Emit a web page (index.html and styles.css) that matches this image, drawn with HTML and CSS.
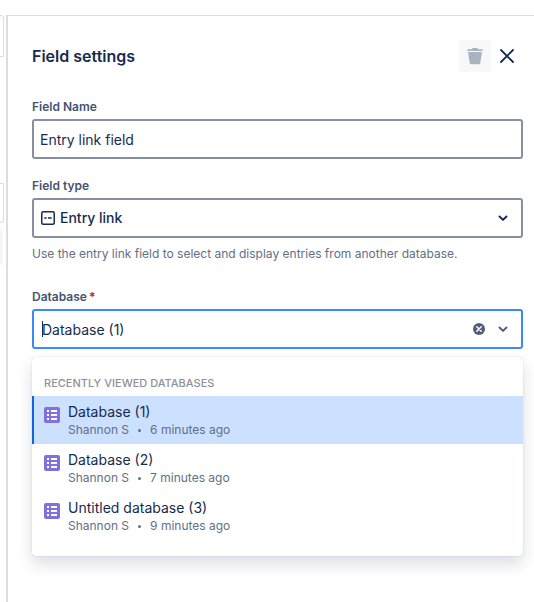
FILE: index.html
```html
<!DOCTYPE html>
<html lang="en">
<head>
<meta charset="utf-8">
<title>Field settings</title>
<link rel="stylesheet" href="styles.css">
</head>
<body>
<svg class="sprite" aria-hidden="true">
  <symbol id="db" viewBox="0 0 16 16">
    <rect width="16" height="16" rx="2" fill="#8270db"/>
    <g fill="#fff">
      <rect x="3" y="3" width="2" height="2"/><rect x="7" y="3" width="6" height="2"/>
      <rect x="3" y="7" width="2" height="2"/><rect x="7" y="7" width="6" height="2"/>
      <rect x="3" y="11" width="2" height="2"/><rect x="7" y="11" width="6" height="2"/>
    </g>
  </symbol>
  <symbol id="chevron" viewBox="0 0 8 6">
    <path d="M1 1.3 4 4.2 7 1.3" fill="none" stroke="currentColor" stroke-width="1.7" stroke-linecap="round" stroke-linejoin="round"/>
  </symbol>
</svg>
<div class="layout">
  <div class="strip" aria-hidden="true">
    <div class="cell cell-top"></div>
    <div class="cell cell-mid"></div>
    <div class="cell-fill"></div>
  </div>
  <main class="panel">
    <header class="header">
      <h1>Field settings</h1>
      <button class="icon-btn delete" type="button" aria-label="Delete field" disabled>
        <svg width="16" height="17" viewBox="0 0 16 17" fill="currentColor"><path d="M5 1.2Q5 0 6.200 0h3.600Q11 0 11 1.200h3.500q1.500 0 1.500 1.800H0q0-1.800 1.500-1.800z"/><path d="M1 4h14l-1.700 11q-.3 1.300-1.600 1.300H4.300Q3 16.300 2.700 15z"/></svg>
      </button>
      <button class="icon-btn" type="button" aria-label="Close">
        <svg width="14" height="14" viewBox="0 0 14 14"><path d="m1 1 12 12M13 1 1 13" stroke="currentColor" stroke-width="1.800" stroke-linecap="round"/></svg>
      </button>
    </header>
    <form>
      <div class="field">
        <label for="name">Field Name</label>
        <input class="control" id="name" type="text" value="Entry link field">
      </div>
      <div class="field">
        <label for="type">Field type</label>
        <div class="wrap">
          <select class="control type" id="type"><option>Entry link</option></select>
          <svg class="type-icon" width="14" height="14" viewBox="0 0 14 14" fill="none" stroke="currentColor"><rect x=".75" y=".75" width="12.500" height="12.500" rx="1.500" stroke-width="1.500"/><path d="M3.300 7h2.400M7 7h3.700" stroke-width="1.600"/></svg>
          <svg class="chevron" width="10" height="7"><use href="#chevron"/></svg>
        </div>
        <p class="help">Use the entry link field to select and display entries from another database.</p>
      </div>
      <div class="field database">
        <label for="database">Database<span class="required">*</span></label>
        <div class="wrap">
          <input class="control combo" id="database" type="text" role="combobox" aria-expanded="true" aria-controls="results" value="Database (1)">
          <span class="caret"></span>
          <button class="clear" type="button" aria-label="Clear">
            <svg width="12" height="12" viewBox="0 0 12 12"><circle cx="6" cy="6" r="6" fill="currentColor"/><path d="m3.800 3.800 4.400 4.400m0-4.400L3.800 8.200" stroke="#fff" stroke-width="1.500" stroke-linecap="round"/></svg>
          </button>
          <svg class="chevron muted" width="10" height="7"><use href="#chevron"/></svg>
          <div class="menu">
            <h2>Recently viewed databases</h2>
            <ul id="results" role="listbox">
              <li class="option selected" role="option" aria-selected="true">
                <svg class="db" width="16" height="16"><use href="#db"/></svg>
                <div><div class="name">Database (1)</div><div class="meta"><span>Shannon S</span><span class="dot"></span><span>6 minutes ago</span></div></div>
              </li>
              <li class="option" role="option">
                <svg class="db" width="16" height="16"><use href="#db"/></svg>
                <div><div class="name">Database (2)</div><div class="meta"><span>Shannon S</span><span class="dot"></span><span>7 minutes ago</span></div></div>
              </li>
              <li class="option" role="option">
                <svg class="db" width="16" height="16"><use href="#db"/></svg>
                <div><div class="name">Untitled database (3)</div><div class="meta"><span>Shannon S</span><span class="dot"></span><span>9 minutes ago</span></div></div>
              </li>
            </ul>
          </div>
        </div>
      </div>
    </form>
  </main>
</div>
</body>
</html>
```
FILE: styles.css
```css
* { box-sizing: border-box; }
body {
  margin: 0;
  background: #fff;
  color: #172b4d;
  font: 14px/20px Inter, "Liberation Sans", sans-serif;
}
h1, h2, p, ul { margin: 0; padding: 0; }
ul { list-style: none; }
.sprite { position: absolute; width: 0; height: 0; }
.layout { display: flex; min-height: 100vh; padding-top: 15px; }
.strip { flex: none; width: 6px; padding-right: 2px; }
.cell { border: 1px solid #dcdde3; border-left: 0; }
.cell-top { height: 42px; border-radius: 0 3px 0 0; }
.cell-mid { height: 40px; margin-top: 126px; border-radius: 0 0 3px 0; }
.cell-fill { height: 36px; margin: 6px 1px 0 0; background: #f5f6f8; border-radius: 0 3px 3px 0; }
.panel {
  flex: 1;
  min-width: 0;
  padding: 24px 11px 24px 24px;
  border-top: 1px solid #dcdde3;
  border-left: 2px solid #dcdde3;
}
.header { display: flex; align-items: center; margin-bottom: 27px; }
h1 { flex: 1; font-size: 16px; line-height: 24px; font-weight: 600; }
button { font: inherit; border: 0; padding: 0; background: none; }
.icon-btn {
  display: flex;
  align-items: center;
  justify-content: center;
  width: 32px;
  height: 32px;
  color: #172b4d;
  border-radius: 3px;
}
.delete { background: #f7f8f9; color: #abb2c0; }
.field { margin-bottom: 19px; }
label {
  display: block;
  margin-bottom: 4px;
  color: #44546f;
  font-size: 12px;
  line-height: 16px;
  font-weight: 600;
}
.required { padding-left: 2px; color: #ae2a19; }
.wrap { position: relative; }
.control {
  display: block;
  width: 100%;
  height: 40px;
  padding: 0 6px;
  border: 2px solid #8590a2;
  border-radius: 3px;
  outline: 0;
  background: #fff;
  color: #172b4d;
  font: inherit;
  appearance: none;
}
.type { padding-left: 26px; font-weight: 500; }
.type-icon { position: absolute; left: 9px; top: 13px; }
.chevron { position: absolute; right: 15px; top: 17px; }
.muted, .clear { color: #505f79; }
.help { margin-top: 8px; color: #626f86; font-size: 12px; line-height: 16px; }
.database { margin-top: 27px; }
.combo { padding: 0 64px 0 8px; border-color: #388bff; }
.caret { position: absolute; left: 10px; top: 12px; width: 1px; height: 16px; background: #172b4d; }
.clear { position: absolute; right: 38px; top: 14px; width: 12px; height: 12px; }
.clear svg { display: block; }
.menu {
  position: absolute;
  top: 48px;
  left: 0;
  right: 0;
  padding: 18px 0 16px;
  background: #fff;
  border-radius: 4px;
  box-shadow: 0 0 1px rgba(9, 30, 66, .31), 0 8px 16px rgba(9, 30, 66, .15);
}
h2 {
  padding: 0 12px;
  margin-bottom: 5px;
  color: #8f9196;
  font-size: 11px;
  line-height: 16px;
  font-weight: 500;
  text-transform: uppercase;
}
.option { display: flex; gap: 8px; padding: 6px 12px; }
.selected { background: #cce0ff; box-shadow: inset 2px 0 #0c66e4; }
.db { flex: none; margin-top: 5px; }
.meta { display: flex; align-items: center; gap: 9px; color: #626f86; font-size: 12px; line-height: 16px; }
.dot { width: 3px; height: 3px; border-radius: 50%; background: currentColor; }
```
